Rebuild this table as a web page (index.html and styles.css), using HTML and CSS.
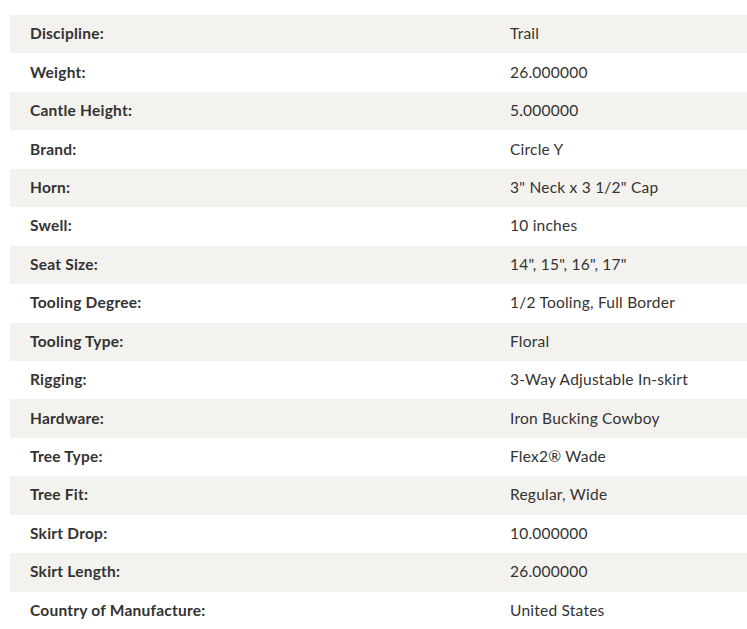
FILE: index.html
```html
<!DOCTYPE html>
<html>
<head>
<meta charset="utf-8">
<link rel="stylesheet" href="styles.css">
</head>
<body>
<div class="specs">
  <table class="spec-table">
    <tbody>
      <tr><th>Discipline:</th><td>Trail</td></tr>
      <tr><th>Weight:</th><td>26.000000</td></tr>
      <tr><th>Cantle Height:</th><td>5.000000</td></tr>
      <tr><th>Brand:</th><td>Circle Y</td></tr>
      <tr><th>Horn:</th><td>3" Neck x 3 1/2" Cap</td></tr>
      <tr><th>Swell:</th><td>10 inches</td></tr>
      <tr><th>Seat Size:</th><td>14", 15", 16", 17"</td></tr>
      <tr><th>Tooling Degree:</th><td>1/2 Tooling, Full Border</td></tr>
      <tr><th>Tooling Type:</th><td>Floral</td></tr>
      <tr><th>Rigging:</th><td>3-Way Adjustable In-skirt</td></tr>
      <tr><th>Hardware:</th><td>Iron Bucking Cowboy</td></tr>
      <tr><th>Tree Type:</th><td>Flex2® Wade</td></tr>
      <tr><th>Tree Fit:</th><td>Regular, Wide</td></tr>
      <tr><th>Skirt Drop:</th><td>10.000000</td></tr>
      <tr><th>Skirt Length:</th><td>26.000000</td></tr>
      <tr><th>Country of Manufacture:</th><td>United States</td></tr>
    </tbody>
  </table>
</div>
</body>
</html>
```
FILE: styles.css
```css
html, body {
  margin: 0;
  padding: 0;
  background: #ffffff;
}
body {
  font-family: Lato, "Open Sans", sans-serif;
  color: #333333;
}
.specs {
  padding: 15px 0 0 10px;
}
.spec-table {
  width: 737px;
  border-collapse: collapse;
  table-layout: fixed;
}
.spec-table tr {
  height: 38.45px;
}
.spec-table tr:nth-child(odd) {
  background: #f4f2ef;
}
.spec-table th,
.spec-table td {
  padding: 0 20px 2px;
  font-size: 15.5px;
  letter-spacing: 0.23px;
  line-height: 20px;
  text-align: left;
  vertical-align: middle;
}
.spec-table th {
  width: 440px;
  font-weight: 700;
}
.spec-table td {
  font-weight: 400;
}
```
